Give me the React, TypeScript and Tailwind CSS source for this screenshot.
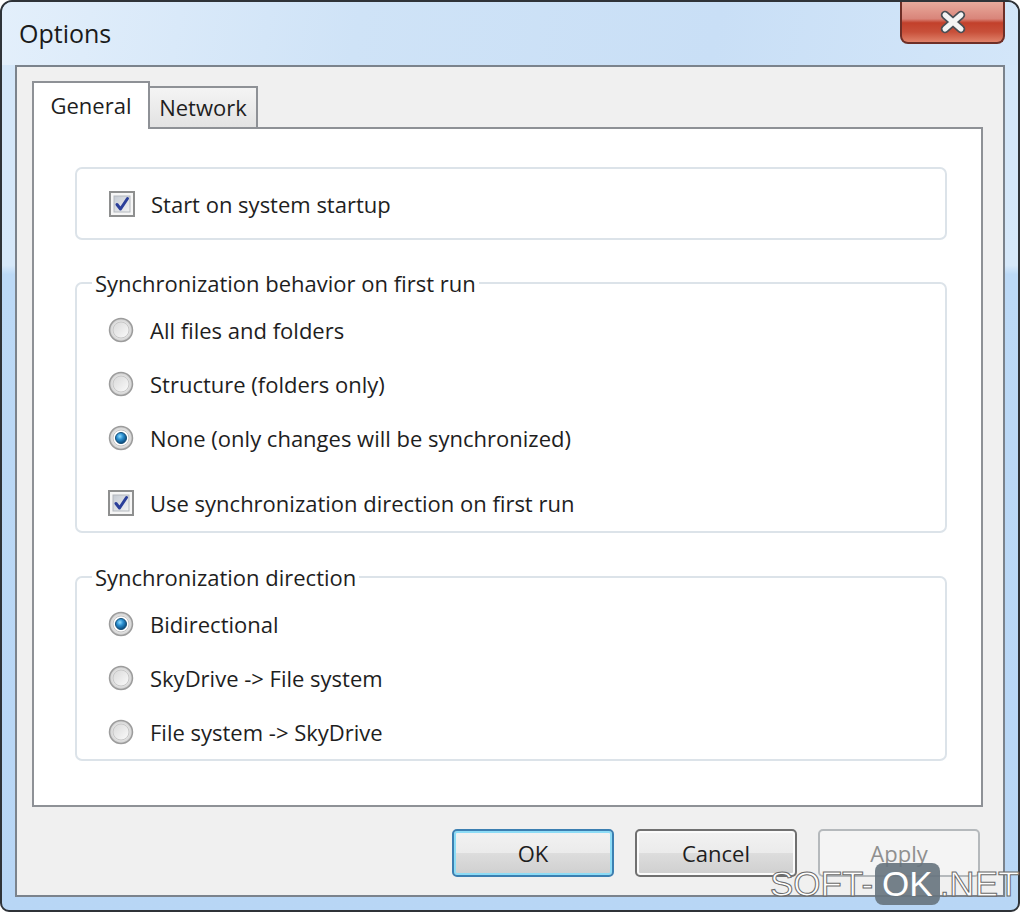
import React, { useId } from 'react';

const CheckBox = () => {
  const id = useId();
  return (
    <svg width="26" height="26" viewBox="0 0 26 26" className="shrink-0">
      <defs>
        <linearGradient id={id} x1="0" y1="0" x2="1" y2="1">
          <stop offset="0" stopColor="#c4cad3" />
          <stop offset="1" stopColor="#f3f3f3" />
        </linearGradient>
      </defs>
      <rect x="1" y="1" width="24" height="24" fill="#f6f6f6" stroke="#8e8f8f" strokeWidth="2" />
      <rect x="5" y="5" width="16" height="16" fill={`url(#${id})`} stroke="#b3b8be" strokeWidth="1" />
      <path d="M8 13.5 L11.5 18 L18.5 7.5" fill="none" stroke="#2b3f9a" strokeWidth="3" strokeLinecap="round" strokeLinejoin="round" />
    </svg>
  );
};

const Radio = ({ checked }: { checked?: boolean }) => {
  const id = useId();
  return (
    <svg width="26" height="26" viewBox="0 0 26 26" className="shrink-0">
      <defs>
        <radialGradient id={`${id}o`} cx="0.5" cy="0.5" r="0.5">
          <stop offset="0.6" stopColor="#f2f2f2" />
          <stop offset="1" stopColor="#c9c9c9" />
        </radialGradient>
        <linearGradient id={`${id}i`} x1="0" y1="0" x2="1" y2="1">
          <stop offset="0" stopColor="#d9d9d9" />
          <stop offset="1" stopColor="#fbfbfb" />
        </linearGradient>
        <radialGradient id={`${id}d`} cx="0.4" cy="0.35" r="0.65">
          <stop offset="0" stopColor="#8fdcff" />
          <stop offset="0.45" stopColor="#2b8fd0" />
          <stop offset="1" stopColor="#0b4a7a" />
        </radialGradient>
      </defs>
      <circle cx="13" cy="13" r="11.5" fill={`url(#${id}o)`} stroke="#9c9c9c" strokeWidth="1.5" />
      {checked ? (
        <>
          <circle cx="13" cy="13" r="8" fill="#ffffff" stroke="#c4c4c4" strokeWidth="1" />
          <circle cx="13" cy="13" r="5.5" fill={`url(#${id}d)`} stroke="#154f78" strokeWidth="1" />
        </>
      ) : (
        <circle cx="13" cy="13" r="8" fill={`url(#${id}i)`} stroke="#c8c8c8" strokeWidth="1" />
      )}
    </svg>
  );
};

const Row = ({ children, label }: { children: React.ReactNode; label: string }) => (
  <div className="flex items-center gap-[16px] h-[54px]">
    {children}
    <span>{label}</span>
  </div>
);

const buttonFace =
  'bg-[linear-gradient(to_bottom,#f2f2f2_0%,#ebebeb_50%,#dddddd_50%,#cfcfcf_100%)]';

export default function App() {
  return (
    <div className="w-[1020px] h-[912px] bg-white font-['Open_Sans',sans-serif] text-[22px] text-[#1e1e1e] relative">
      <div className="w-full h-full rounded-t-[12px] rounded-b-[9px] border-2 border-[#2f3338] overflow-hidden flex flex-col bg-[linear-gradient(to_bottom,#d3e6f9_0%,#d6e8f9_29%,#bcd9f6_30%,#b8d6f5_100%)]">
        {/* title bar */}
        <div className="h-[63px] flex justify-between items-start bg-[linear-gradient(100deg,#e3effb_0%,#cfe3f7_35%,#c9dff6_70%,#d3e6f9_100%)]">
          <div className="pl-[17px] pt-[15px] text-[25px] leading-[32px] text-[#1a1a1a]">Options</div>
          <div className="mr-[13px] w-[105px] h-[42px] rounded-b-[8px] border-2 border-t-0 border-[#6e2f27] flex items-center justify-center bg-[linear-gradient(to_bottom,#e9aa9c_0%,#d9857a_42%,#c2402b_52%,#c8503a_75%,#e0826a_100%)]">
            <svg width="36" height="26" viewBox="0 0 36 26">
              <path d="M10 6 L26 20 M26 6 L10 20" stroke="#4a4f55" strokeWidth="8.5" strokeLinecap="round" />
              <path d="M10 6 L26 20 M26 6 L10 20" stroke="#f4f4f4" strokeWidth="5" strokeLinecap="round" />
            </svg>
          </div>
        </div>

        {/* client area */}
        <div className="flex-1 mx-[13px] mb-[13px] border-2 border-[#7b838c] bg-[#f0f0f0] flex flex-col pl-[15px] pt-[14px]">
          <div className="flex items-end h-[46px]">
            <div className="w-[118px] h-[48px] -mb-[2px] relative z-10 bg-white border-2 border-b-0 border-[#8e9196] flex justify-center pt-[6px] leading-[32px]">
              General
            </div>
            <div className="w-[108px] h-[41px] border-2 border-l-0 border-b-0 border-[#8e9196] bg-[linear-gradient(to_bottom,#f4f4f4,#e3e3e3)] flex justify-center pt-[3px] leading-[32px]">
              Network
            </div>
          </div>

          <div className="w-[951px] h-[680px] border-2 border-[#8e9196] bg-white pt-[38px] pl-[41px] leading-[28px]">
            <div className="w-[872px] h-[73px] border-2 border-[#dce3e9] rounded-[7px] flex items-center pl-[32px] gap-[16px]">
              <CheckBox />
              <span>Start on system startup</span>
            </div>

            <fieldset className="w-[872px] mt-[29px] border-2 border-[#dce3e9] rounded-[7px] px-[15px] pb-[8px]">
              <legend className="px-[3px]">Synchronization behavior on first run</legend>
              <div className="pl-[16px] pt-[6px]">
                <Row label="All files and folders"><Radio /></Row>
                <Row label="Structure (folders only)"><Radio /></Row>
                <Row label="None (only changes will be synchronized)"><Radio checked /></Row>
                <div className="flex items-center gap-[16px] h-[40px] mt-[18px]">
                  <CheckBox />
                  <span>Use synchronization direction on first run</span>
                </div>
              </div>
            </fieldset>

            <fieldset className="w-[872px] mt-[30px] border-2 border-[#dce3e9] rounded-[7px] px-[15px]">
              <legend className="px-[3px]">Synchronization direction</legend>
              <div className="pl-[16px] pt-[6px]">
                <Row label="Bidirectional"><Radio checked /></Row>
                <Row label="SkyDrive -> File system"><Radio /></Row>
                <Row label="File system -> SkyDrive"><Radio /></Row>
              </div>
            </fieldset>
          </div>

          <div className="flex justify-end gap-[21px] pr-[23px] mt-[22px]">
            <button className={`w-[162px] h-[48px] rounded-[5px] border-2 border-[#3c7fb1] shadow-[inset_0_0_0_2px_#8ddcf6] ${buttonFace}`}>
              OK
            </button>
            <button className={`w-[162px] h-[48px] rounded-[5px] border-2 border-[#707070] shadow-[inset_0_0_0_2px_#fbfbfb] ${buttonFace}`}>
              Cancel
            </button>
            <button className="w-[162px] h-[48px] rounded-[5px] border-2 border-[#b5b9bc] bg-[#f4f4f4] text-[#8f8f8f]">
              Apply
            </button>
          </div>
        </div>
      </div>

      {/* watermark */}
      <div className="absolute left-[770px] top-[863px] flex items-center font-['Liberation_Sans',sans-serif] text-[35px] leading-[42px] text-white [-webkit-text-stroke:1px_#6a6a6a]">
        <span>SOFT-</span>
        <span className="ml-[2px] px-[7px] rounded-[8px] bg-[#66737d]/90 [-webkit-text-stroke:0px]">OK</span>
        <span>.NET</span>
      </div>
    </div>
  );
}
